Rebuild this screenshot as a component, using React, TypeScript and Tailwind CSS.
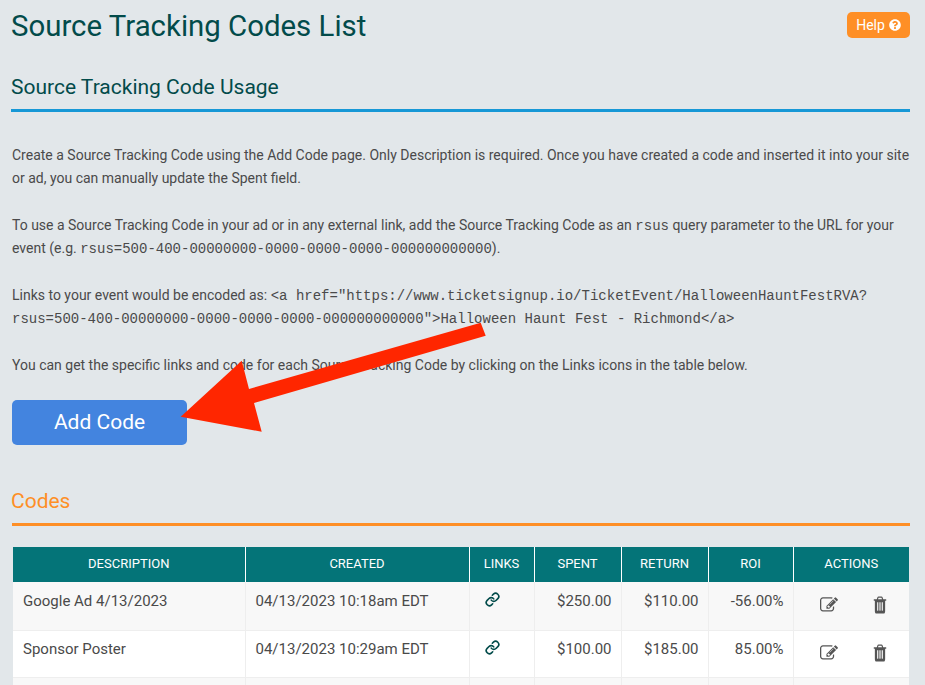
import React from "react";
import { FaQuestionCircle } from "react-icons/fa";
import { Link } from "lucide-react";

const Mono = ({ children }: { children: React.ReactNode }) => (
  <span className="font-['Liberation_Mono',monospace] text-[14px] leading-none">{children}</span>
);

const EditIcon = () => (
  <svg viewBox="0 0 1792 1792" className="h-[18px] w-[18px] text-[#555]" fill="currentColor">
    <path d="M888 1184l116-116-152-152-116 116v56h96v96h56zm440-720q-16-16-33 1l-350 350q-17 17-1 33t33-1l350-350q17-17 1-33zm80 594v190q0 119-84.5 203.5t-203.5 84.5h-832q-119 0-203.5-84.5t-84.5-203.5v-832q0-119 84.5-203.5t203.5-84.5h832q63 0 117 25 15 7 18 23 3 17-9 29l-49 49q-14 14-32 8-23-6-45-6h-832q-66 0-113 47t-47 113v832q0 66 47 113t113 47h832q66 0 113-47t47-113v-126q0-13 9-22l64-64q15-15 35-7t20 29zm-96-738l288 288-672 672h-288v-288zm444 132l-92 92-288-288 92-92q28-28 68-28t68 28l152 152q28 28 28 68t-28 68z" />
  </svg>
);

const TrashIcon = () => (
  <svg viewBox="0 0 1792 1792" preserveAspectRatio="none" className="h-[20px] w-[16px] text-[#555]" fill="currentColor">
    <path d="M704 1376v-704q0-14-9-23t-23-9h-64q-14 0-23 9t-9 23v704q0 14 9 23t23 9h64q14 0 23-9t9-23zm256 0v-704q0-14-9-23t-23-9h-64q-14 0-23 9t-9 23v704q0 14 9 23t23 9h64q14 0 23-9t9-23zm256 0v-704q0-14-9-23t-23-9h-64q-14 0-23 9t-9 23v704q0 14 9 23t23 9h64q14 0 23-9t9-23zm-544-992h448l-48-117q-7-9-17-11h-317q-10 2-17 11zm928 32v64q0 14-9 23t-23 9h-96v948q0 83-47 143.5t-113 60.5h-832q-66 0-113-58.5t-47-141.5v-952h-96q-14 0-23-9t-9-23v-64q0-14 9-23t23-9h309l70-167q15-37 54-63t79-26h320q40 0 79 26t54 63l70 167h309q14 0 23 9t9 23z" />
  </svg>
);

const rows = [
  { d: "Google Ad 4/13/2023", c: "04/13/2023 10:18am EDT", s: "$250.00", r: "$110.00", o: "-56.00%", bg: "bg-[#f8f8f8]", h: "h-[48px]", pt: "pt-[9px]" },
  { d: "Sponsor Poster", c: "04/13/2023 10:29am EDT", s: "$100.00", r: "$185.00", o: "85.00%", bg: "bg-white", h: "h-[47px]", pt: "pt-[8px]" },
];

const th = "border-l border-white first:border-l-0 pb-[2px] text-center text-[13px] font-normal uppercase text-white align-middle";
const td = "border-l border-[#eeeeee] first:border-l-0 align-top text-[15px] leading-[20px] text-[#4a4a4a]";

export default function App() {
  return (
    <div className="relative h-[685px] w-[925px] overflow-hidden bg-[#e2e7ea] font-['Roboto',sans-serif] text-[#4a4a4a]">
      <div className="flex items-start justify-between pl-[11px] pr-[15px] pt-[8px]">
        <h1 className="text-[29.4px] leading-[36px] text-[#024b4a]">Source Tracking Codes List</h1>
        <button className="mt-[4px] flex h-[26px] w-[63px] items-center justify-center gap-[4px] rounded-[5px] bg-[#fe8f26] text-[14px] text-white">
          Help <FaQuestionCircle className="h-[12px] w-[12px]" />
        </button>
      </div>

      <div className="mx-[12px] mr-[15px] mt-[29px]">
        <h2 className="-ml-px border-b-[3px] border-[#1798d6] pb-[8px] text-[21px] leading-[28px] text-[#024b4a]">
          Source Tracking Code Usage
        </h2>

        <div className="mt-[32px] text-[14px] leading-[23.33px]">
          <p>
            Create a Source Tracking Code using the Add Code page. Only Description is required. Once you have created a code and inserted it into your site or ad, you can manually update the Spent field.
          </p>
          <p className="mt-[23.33px]">
            To use a Source Tracking Code in your ad or in any external link, add the Source Tracking Code as an <Mono>rsus</Mono> query parameter to the URL for your event (e.g. <Mono>rsus=500-400-00000000-0000-0000-0000-000000000000</Mono>).
          </p>
          <p className="mt-[23.33px]">
            Links to your event would be encoded as: <Mono>&lt;a href="https://www.ticketsignup.io/TicketEvent/HalloweenHauntFestRVA?rsus=500-400-00000000-0000-0000-0000-000000000000"&gt;Halloween Haunt Fest - Richmond&lt;/a&gt;</Mono>
          </p>
          <p className="mt-[23.33px]">
            You can get the specific links and code for each Source Tracking Code by clicking on the Links icons in the table below.
          </p>
        </div>

        <button className="mt-[23px] flex h-[45px] w-[175px] items-center justify-center rounded-[5px] bg-[#4384df] text-[21px] text-white">
          Add Code
        </button>

        <h2 className="mt-[42px] border-b-[3px] border-[#fe8f26] pb-[8px] text-[21px] leading-[28px] text-[#fe8f26]">
          <span className="-ml-px">Codes</span>
        </h2>

        <table className="ml-px mt-[21px] w-[896px] table-fixed border-collapse">
          <colgroup>
            <col className="w-[232px]" />
            <col className="w-[224px]" />
            <col className="w-[65px]" />
            <col className="w-[87px]" />
            <col className="w-[87px]" />
            <col className="w-[85px]" />
            <col className="w-[116px]" />
          </colgroup>
          <thead>
            <tr className="h-[35px] bg-[#047478]">
              {["Description", "Created", "Links", "Spent", "Return", "ROI", "Actions"].map((h) => (
                <th key={h} className={th}>{h}</th>
              ))}
            </tr>
          </thead>
          <tbody>
            {rows.map((r) => (
              <tr key={r.d} className={`${r.h} ${r.bg} border-b border-[#eeeeee]`}>
                <td className={`${td} ${r.pt} pl-[10px]`}>{r.d}</td>
                <td className={`${td} ${r.pt} pl-[10px]`}>{r.c}</td>
                <td className={`${td} ${r.pt}`}>
                  <div className="flex pl-[15px] pt-[1px]">
                    <Link size={15} strokeWidth={2.6} className="text-[#024b4a]" />
                  </div>
                </td>
                <td className={`${td} ${r.pt} pr-[9px] text-right`}>{r.s}</td>
                <td className={`${td} ${r.pt} pr-[9px] text-right`}>{r.r}</td>
                <td className={`${td} ${r.pt} pr-[9px] text-right`}>{r.o}</td>
                <td className={`${td} ${r.pt}`}>
                  <div className="flex items-center justify-between pl-[26px] pr-[21px] pt-[4px]">
                    <EditIcon />
                    <TrashIcon />
                  </div>
                </td>
              </tr>
            ))}
            <tr className="h-[47px] bg-[#f8f8f8]">
              {[0, 1, 2, 3, 4, 5, 6].map((i) => (
                <td key={i} className={td}></td>
              ))}
            </tr>
          </tbody>
        </table>
      </div>

      <svg className="pointer-events-none absolute left-0 top-0" width="925" height="685">
        <polygon points="180.7,416.7 241.7,360.7 249,389 480.7,322.7 485.7,335.7 254,403 261.7,431.7" fill="#ff2600" />
      </svg>
    </div>
  );
}
